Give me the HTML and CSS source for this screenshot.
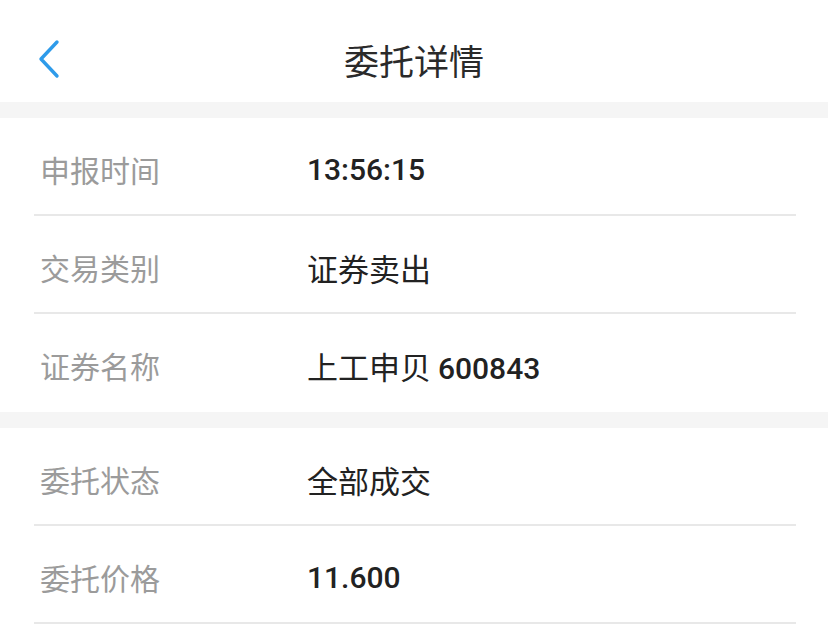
FILE: index.html
```html
<!DOCTYPE html>
<html lang="zh">
<head>
<meta charset="utf-8">
<title>委托详情</title>
<link rel="stylesheet" href="styles.css">
</head>
<body>
<div class="page">
  <header class="nav">
    <a class="back" href="#" aria-label="返回">
      <svg width="28" height="42" viewBox="0 0 28 42"><path d="M21 4 L5 21 L21 38" fill="none" stroke="#2e9bea" stroke-width="3.4" stroke-linecap="round" stroke-linejoin="round"/></svg>
    </a>
    <h1 class="title">委托详情</h1>
  </header>
  <div class="band"></div>
  <section class="group">
    <div class="row"><span class="label">申报时间</span><span class="value num">13:56:15</span></div>
    <div class="row"><span class="label">交易类别</span><span class="value">证券卖出</span></div>
    <div class="row"><span class="label">证券名称</span><span class="value">上工申贝 <span class="num">600843</span></span></div>
  </section>
  <div class="band"></div>
  <section class="group">
    <div class="row"><span class="label">委托状态</span><span class="value">全部成交</span></div>
    <div class="row"><span class="label">委托价格</span><span class="value num">11.600</span></div>
  </section>
</div>
</body>
</html>
```

FILE: styles.css
```css
html, body {
  margin: 0;
  padding: 0;
  background: #fff;
}
body {
  font-family: "Noto Sans CJK SC", "Noto Sans", sans-serif;
  overflow: hidden;
}
.page {
  width: 828px;
}
.nav {
  height: 102px;
  display: flex;
  align-items: center;
  justify-content: center;
  position: relative;
}
.back {
  position: absolute;
  left: 36px;
  top: 38px;
  display: block;
  width: 28px;
  height: 42px;
}
.back svg { display: block; }
.title {
  margin: 16px 0 0;
  font-size: 35px;
  font-weight: 400;
  color: #2a2a2a;
}
.band {
  height: 16px;
  background: #f5f5f5;
}
.group {
  padding: 0 32px 0 34px;
}
.row {
  display: flex;
  align-items: center;
  border-bottom: 2px solid #e8e8e8;
  padding-top: 6px;
  height: 90px;
}
.group:first-of-type .row:last-child {
  border-bottom-color: transparent;
}
.label {
  width: 267px;
  padding-left: 6px;
  font-size: 30px;
  color: #9b9b9b;
}
.value {
  font-size: 31px;
  color: #222;
}
.num {
  font-family: "Roboto", "Noto Sans", sans-serif;
  font-size: 30px;
  font-weight: 500;
}
```
